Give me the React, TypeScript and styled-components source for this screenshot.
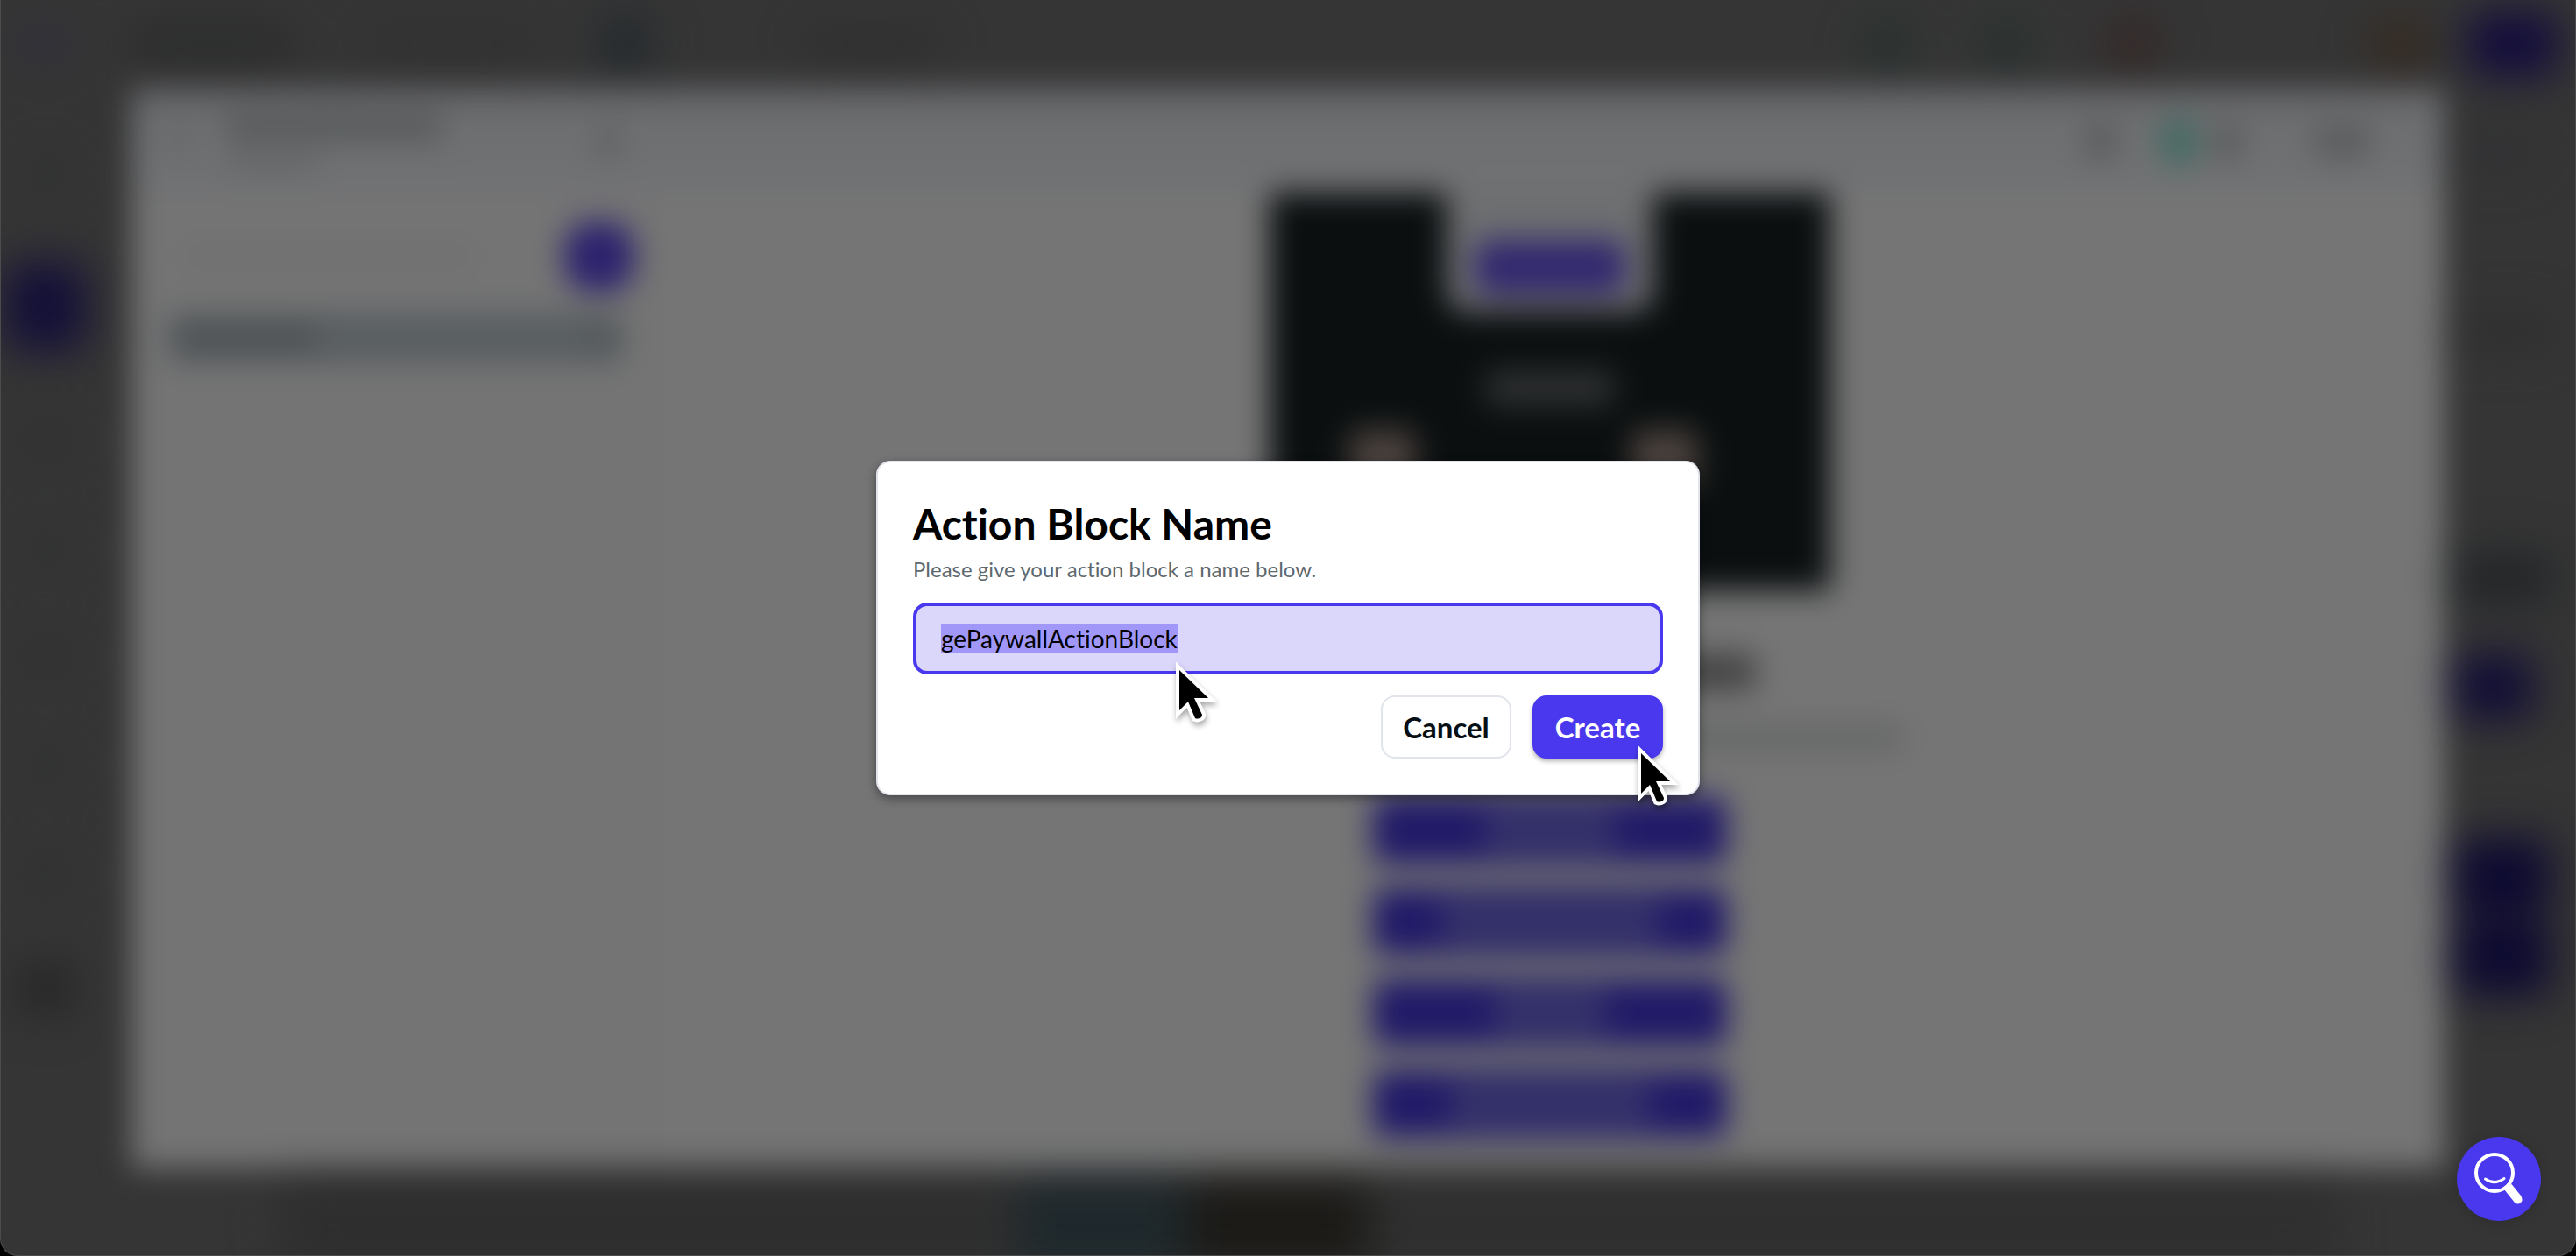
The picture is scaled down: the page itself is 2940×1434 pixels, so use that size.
import React, { useEffect, useRef } from "react";
import styled, { createGlobalStyle } from "styled-components";

const color = {
  brand: "#4a38ee",
  field: "#dbd7fb",
  selection: "#a197f8",
  line: "#e1e5eb",
  ink: "#070f14",
  muted: "#5d686f",
};

const GlobalStyle = createGlobalStyle`
  *, *::before, *::after { box-sizing: border-box; }
  html { background: #000; }
  body {
    margin: 0;
    font-family: Lato, "Open Sans", sans-serif;
    font-variant-ligatures: none;
    color: #000;
  }
`;

const Screen = styled.div`
  position: relative;
  display: grid;
  min-height: 100vh;
  overflow: hidden;
  border-radius: 0 0 20px 20px;
  background: #353535;

  &::after {
    content: "";
    position: absolute;
    inset: 0;
    border: 1px solid #4c4c4c;
    border-top: 0;
    border-radius: 0 0 20px 20px;
    pointer-events: none;
  }

  > * { grid-area: 1 / 1; }
`;

/* Page that stays out of focus behind the dialog */
const Backdrop = styled.div`
  display: grid;
  grid-template: 100px 1fr 100px / 150px 1fr 150px;
  filter: blur(17px);
`;

const Shape = styled.span<{ $w: number; $h: number; $c: string; $r?: number; $ml?: number }>`
  flex: none;
  width: ${(p) => p.$w}px;
  height: ${(p) => p.$h}px;
  margin-left: ${(p) => p.$ml ?? 0}px;
  border-radius: ${(p) => p.$r ?? 12}px;
  background: ${(p) => p.$c};
`;

/* The page under the editor sits one layer further back, so it is softer */
const Distant = styled.div`
  display: flex;
  filter: blur(18px);
`;

const TopBar = styled(Distant)`
  grid-column: 1 / -1;
  align-items: center;
  justify-content: space-between;
  padding: 0 20px;
`;

const Group = styled.div`
  display: flex;
  align-items: center;
`;

const Rail = styled(Distant)`
  flex-direction: column;
  align-items: center;
  gap: 80px;
  padding: 76px 46px 0 0;
`;

const Aside = styled(Distant)`
  flex-direction: column;
  padding: 60px 0 0 12px;
`;

const AsideItem = styled(Shape)<{ $mt: number }>`
  margin-top: ${(p) => p.$mt}px;
`;

const BottomBar = styled(Distant)`
  grid-column: 1 / -1;
  justify-content: center;
  padding: 16px 0 0 44px;
`;

const Editor = styled.div`
  position: relative;
  display: grid;
  grid-template: 120px 1fr / 600px 1fr;
  background: #757575;
`;

const EditorHeader = styled.div`
  grid-column: 1 / -1;
  display: flex;
  align-items: center;
  justify-content: space-between;
  padding: 4px 84px 0 42px;
  background: linear-gradient(#636467, #6e6f71 34%, #717274);
`;

const TitleStack = styled.div`
  display: flex;
  flex-direction: column;
  gap: 14px;
  width: 300px;
  margin-left: 40px;
`;

const SidePanel = styled.div`
  display: flex;
  flex-direction: column;
  gap: 24px;
  padding: 33px 34px 0 40px;
  background: #747474;
  border-right: 4px solid #727272;
`;

const SearchRow = styled.div`
  display: flex;
  align-items: center;
  justify-content: space-between;
  padding-left: 20px;
  margin-right: -12px;
`;

const ListRow = styled.div`
  display: flex;
  align-items: center;
  justify-content: space-between;
  height: 58px;
  padding: 0 12px;
  border-radius: 12px;
  background: #595e61;
`;

const Canvas = styled.div`
  display: flex;
  flex-direction: column;
  align-items: center;
  padding-right: 2px;
`;

const Hero = styled.div`
  display: flex;
  flex-direction: column;
  align-items: center;
  width: 640px;
  height: 454px;
  background: #0b0f10;
`;

const Notch = styled.div`
  display: flex;
  align-items: center;
  justify-content: center;
  width: 236px;
  height: 136px;
  padding-top: 34px;
  border-radius: 0 0 24px 24px;
  background: #6d6e70;
`;

const HeroCaption = styled(Shape)`
  margin-top: 66px;
`;

const Portraits = styled.div`
  display: flex;
  gap: 246px;
  padding: 26px 60px 0 0;
`;

const CopyBlock = styled.div`
  display: flex;
  flex-direction: column;
  align-items: center;
  gap: 38px;
  padding: 72px 0 52px;
`;

const ActionStack = styled.div`
  display: flex;
  flex-direction: column;
  gap: 28px;
`;

const Action = styled.div`
  display: flex;
  align-items: center;
  justify-content: center;
  width: 404px;
  height: 76px;
  border-radius: 12px;
  background: #211a68;
`;

/* Dialog */
const DialogLayer = styled.div`
  z-index: 1;
  display: flex;
  align-items: center;
  justify-content: center;
`;

const Dialog = styled.form`
  display: flex;
  flex-direction: column;
  width: 940px;
  max-width: 100%;
  padding: 40px;
  border: 2px solid ${color.line};
  border-radius: 16px;
  background: #fff;
  box-shadow: 0 4px 12px rgba(0, 0, 0, 0.4);
`;

const Title = styled.h1`
  margin: 0;
  font-size: 48px;
  line-height: 60px;
  font-weight: 700;
`;

const Hint = styled.label`
  margin: 6px 0 22px;
  font-size: 24px;
  line-height: 32px;
  color: ${color.muted};
`;

const Anchor = styled.div`
  position: relative;
  display: flex;
`;

const NameInput = styled.input`
  flex: 1;
  min-width: 0;
  height: 82px;
  padding: 0 28px;
  border: 4px solid ${color.brand};
  border-radius: 16px;
  outline: 0;
  background: ${color.field};
  color: #000;
  font-family: inherit;
  font-size: 28px;
  font-variant-ligatures: none;

  &::selection {
    background: ${color.selection};
    color: #000;
  }
`;

const Buttons = styled.div`
  display: flex;
  justify-content: flex-end;
  gap: 24px;
  margin-top: 24px;
`;

const Button = styled.button<{ $primary?: boolean }>`
  width: 149px;
  height: 72px;
  padding: 0;
  border: 2px solid ${(p) => (p.$primary ? color.brand : color.line)};
  border-radius: 16px;
  background: ${(p) => (p.$primary ? color.brand : "#fff")};
  color: ${(p) => (p.$primary ? "#fff" : color.ink)};
  box-shadow: ${(p) => (p.$primary ? "0 3px 5px rgba(0, 0, 0, 0.3)" : "none")};
  font-family: inherit;
  font-size: 33px;
  font-weight: 700;
`;

const Pointer = styled.svg<{ $x: number; $y: number }>`
  position: absolute;
  left: ${(p) => p.$x}px;
  top: ${(p) => p.$y}px;
  width: 50px;
  height: 76px;
  overflow: visible;
  filter: drop-shadow(1px 4px 3px rgba(0, 0, 0, 0.35));
  pointer-events: none;
`;

const HelpButton = styled.button`
  z-index: 2;
  align-self: end;
  justify-self: end;
  width: 96px;
  height: 96px;
  margin: 0 40px 40px 0;
  padding: 0;
  border: 0;
  border-radius: 50%;
  background: ${color.brand};
  box-shadow: 0 2px 16px rgba(0, 0, 0, 0.15);

  svg { display: block; }
`;

function Cursor({ x, y }: { x: number; y: number }) {
  return (
    <Pointer $x={x} $y={y} viewBox="0 0 50 76" aria-hidden="true">
      <path
        d="M4 10 37 42H21L30 61Q30 64 27 65T22 65L14 46 4 56Z"
        fill="#000"
        stroke="#fff"
        strokeWidth="8"
        paintOrder="stroke"
      />
    </Pointer>
  );
}

const actionLabels = [150, 250, 130, 230];

export default function App() {
  const nameRef = useRef<HTMLInputElement>(null);

  useEffect(() => {
    nameRef.current?.focus();
    nameRef.current?.select();
  }, []);

  return (
    <>
      <GlobalStyle />
      <Screen>
        <Backdrop aria-hidden="true">
          <TopBar>
            <Group>
              <Shape $w={60} $h={40} $c="#312f3c" />
              <Shape $w={180} $h={34} $c="#292a2a" $ml={70} />
              <Shape $w={190} $h={28} $c="#303030" $ml={90} />
              <Shape $w={56} $h={64} $c="#23292d" $ml={75} />
              <Shape $w={150} $h={28} $c="#2e2e2e" $ml={180} />
            </Group>
            <Group>
              <Shape $w={48} $h={52} $c="#24312e" $r={24} />
              <Shape $w={48} $h={52} $c="#24312e" $r={24} $ml={88} />
              <Shape $w={60} $h={56} $c="#352726" $r={24} $ml={90} />
              <Shape $w={64} $h={52} $c="#35291f" $ml={244} />
              <Shape $w={104} $h={72} $c="#120b3c" $r={20} $ml={44} />
            </Group>
          </TopBar>

          <Rail>
            <Shape $w={44} $h={44} $c="#303131" />
            <Shape $w={92} $h={100} $c="#130e38" $r={20} />
            <Shape $w={44} $h={44} $c="#2f3030" />
            <Shape $w={44} $h={44} $c="#303131" />
            <Shape $w={44} $h={44} $c="#2f3030" />
            <Shape $w={44} $h={44} $c="#303131" />
            <Shape $w={44} $h={44} $c="#2f3030" />
            <Shape $w={60} $h={56} $c="#252525" />
          </Rail>

          <Editor>
            <EditorHeader>
              <Group>
                <Shape $w={24} $h={40} $c="#666769" />
                <TitleStack>
                  <Shape $w={250} $h={34} $c="#585b5c" />
                  <Shape $w={110} $h={20} $c="#636567" />
                </TitleStack>
                <Shape $w={32} $h={40} $c="#626364" $ml={122} />
              </Group>
              <Group>
                <Shape $w={34} $h={42} $c="#585a5b" />
                <Shape $w={46} $h={56} $c="#446b62" $r={24} $ml={50} />
                <Shape $w={32} $h={40} $c="#58595a" $ml={16} />
                <Shape $w={66} $h={38} $c="#5b5c5d" $ml={82} />
              </Group>
            </EditorHeader>

            <SidePanel>
              <SearchRow>
                <Shape $w={330} $h={30} $c="#707070" />
                <Shape $w={80} $h={80} $c="#2c226e" $r={32} />
              </SearchRow>
              <ListRow>
                <Shape $w={160} $h={36} $c="#4f5355" />
                <Shape $w={24} $h={32} $c="#4f5456" />
              </ListRow>
            </SidePanel>

            <Canvas>
              <Hero>
                <Notch>
                  <Shape $w={172} $h={62} $c="#32286f" $r={16} />
                </Notch>
                <HeroCaption $w={150} $h={42} $c="#2d2f30" />
                <Portraits>
                  <Shape $w={76} $h={70} $c="#4a413d" />
                  <Shape $w={76} $h={70} $c="#4a413d" />
                </Portraits>
              </Hero>
              <CopyBlock>
                <Shape $w={470} $h={42} $c="#434343" />
                <Shape $w={810} $h={32} $c="#666867" />
              </CopyBlock>
              <ActionStack>
                {actionLabels.map((w) => (
                  <Action key={w}>
                    <Shape $w={w} $h={52} $c="#35326a" />
                  </Action>
                ))}
              </ActionStack>
            </Canvas>
          </Editor>

          <Aside>
            <AsideItem $mt={0} $w={90} $h={30} $c="#303134" />
            <AsideItem $mt={170} $w={110} $h={36} $c="#2e2f2e" />
            <AsideItem $mt={236} $w={110} $h={56} $c="#222528" />
            <AsideItem $mt={60} $w={88} $h={72} $c="#100b36" $r={16} />
            <AsideItem $mt={138} $w={108} $h={84} $c="#0c0831" $r={16} />
            <AsideItem $mt={10} $w={108} $h={84} $c="#0c0831" $r={16} />
          </Aside>

          <BottomBar>
            <Shape $w={840} $h={100} $c="#2e2e2e" />
            <Shape $w={190} $h={100} $c="#1e282c" />
            <Shape $w={210} $h={100} $c="#1b1a17" />
            <Shape $w={1100} $h={100} $c="#2e2f2e" />
          </BottomBar>
        </Backdrop>

        <DialogLayer>
          <Dialog
            role="dialog"
            aria-labelledby="dialog-title"
            onSubmit={(e: React.FormEvent) => e.preventDefault()}
          >
            <Title id="dialog-title">Action Block Name</Title>
            <Hint htmlFor="block-name">Please give your action block a name below.</Hint>
            <Anchor>
              <NameInput
                ref={nameRef}
                id="block-name"
                type="text"
                autoComplete="off"
                spellCheck={false}
                defaultValue="gePaywallActionBlock"
              />
              <Cursor x={300} y={67} />
            </Anchor>
            <Buttons>
              <Button type="button">Cancel</Button>
              <Anchor>
                <Button type="submit" $primary>
                  Create
                </Button>
                <Cursor x={120} y={56} />
              </Anchor>
            </Buttons>
          </Dialog>
        </DialogLayer>

        <HelpButton type="button" aria-label="Search help">
          <svg width="96" height="96" viewBox="0 0 96 96" fill="none" stroke="#fff" strokeLinecap="round">
            <circle cx="43" cy="41" r="21" strokeWidth="4" />
            <path d="M32.500 48Q43 55.500 54 47.500" strokeWidth="3" />
            <path d="M57 57 62.500 54 73 67Q76 72 73 75T66 75L54 60Z" fill="#fff" stroke="none" />
          </svg>
        </HelpButton>
      </Screen>
    </>
  );
}
